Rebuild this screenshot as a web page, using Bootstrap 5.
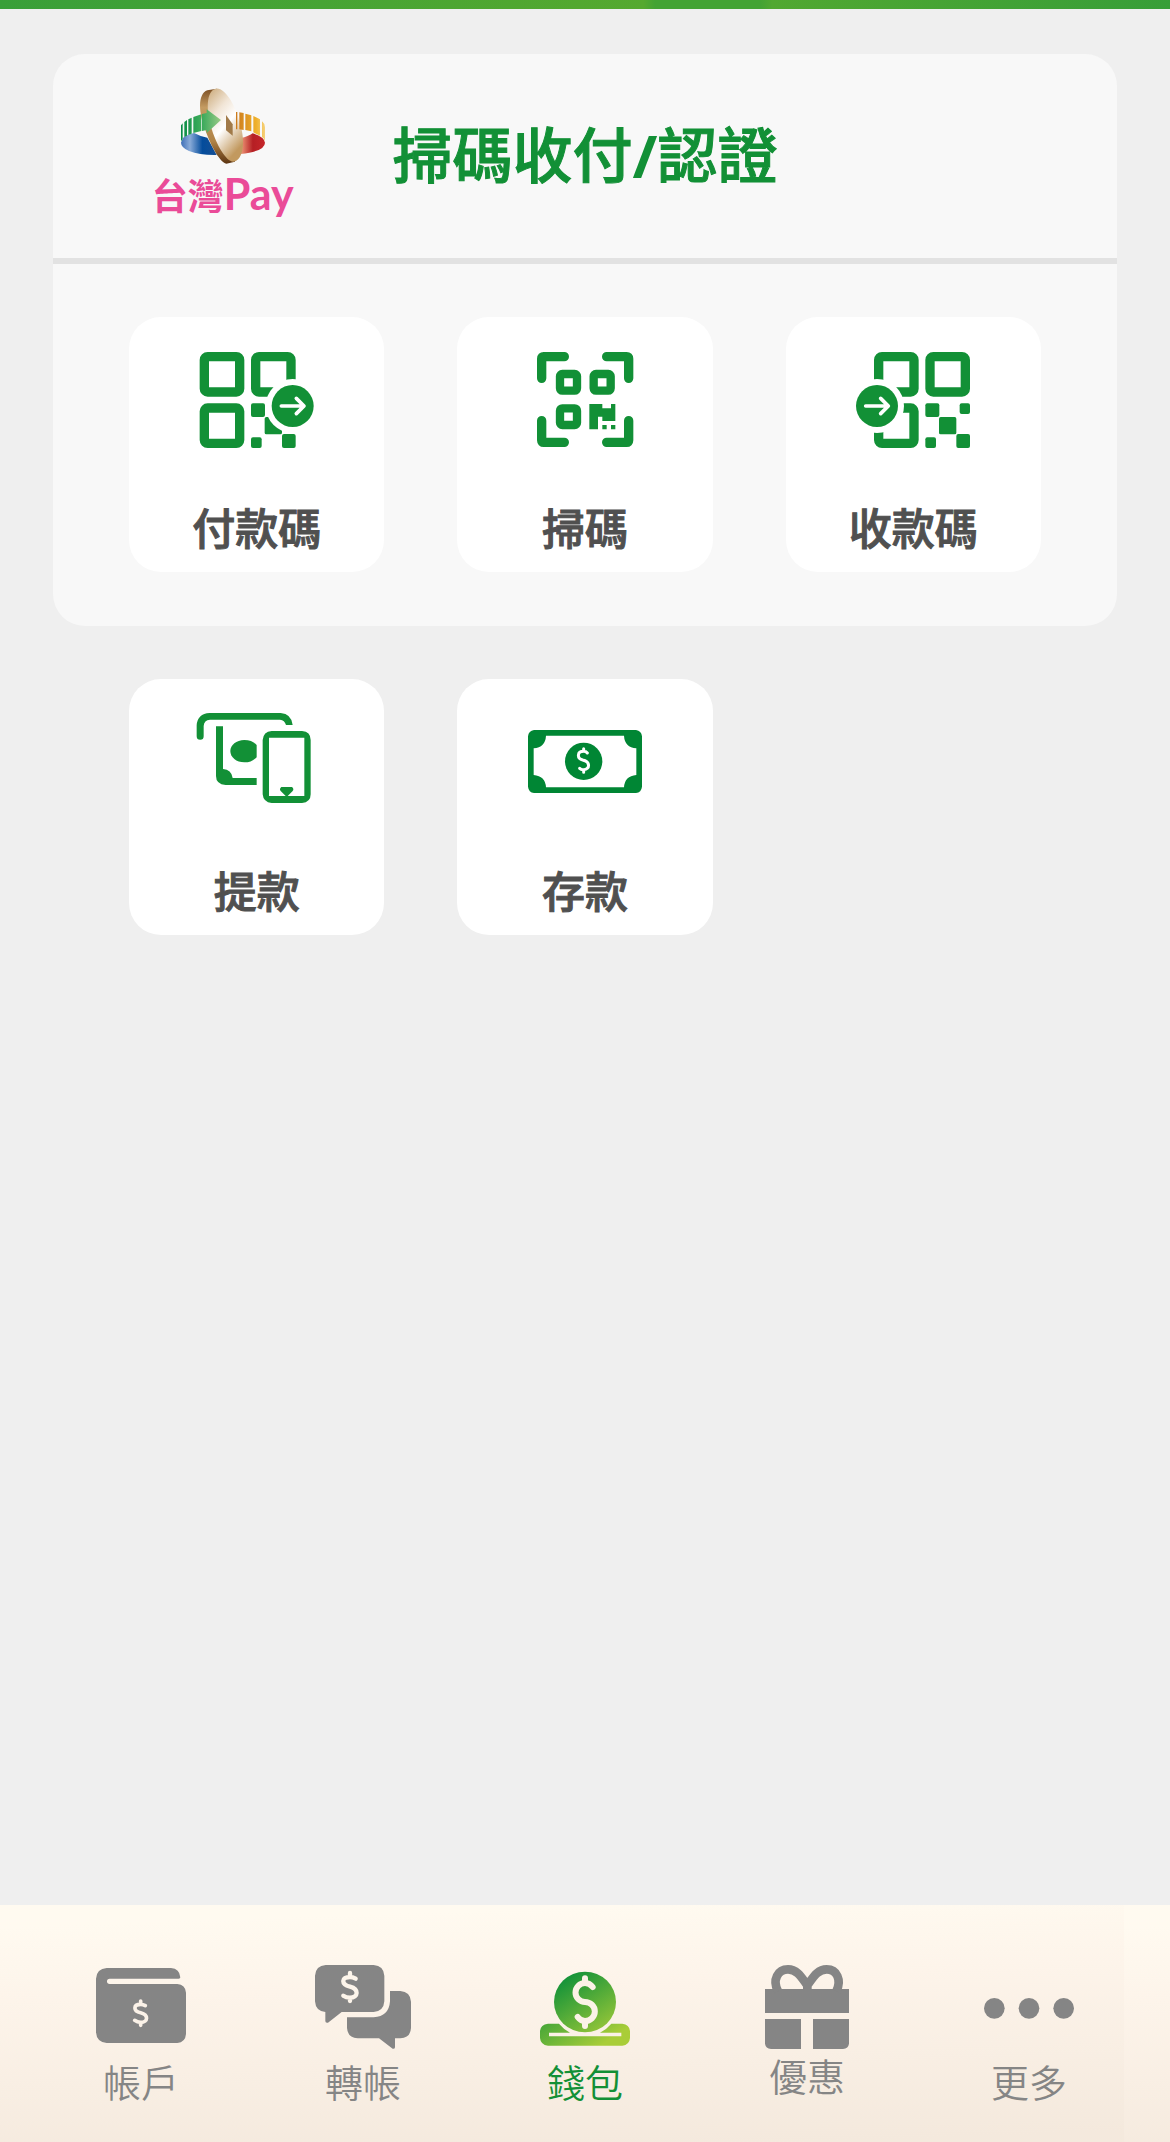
<!DOCTYPE html>
<html lang="zh-Hant">
<head>
<meta charset="utf-8">
<meta name="viewport" content="width=device-width, initial-scale=1">
<title>錢包</title>
<link href="https://cdn.jsdelivr.net/npm/bootstrap@5.3.0/dist/css/bootstrap.min.css" rel="stylesheet">
<style>
  :root { --brand: #129036; --muted: #858585; }
  body { background: #efefef; font-family: "Noto Sans CJK TC", sans-serif; }
  a { text-decoration: none; }
  svg { display: block; overflow: visible; }
  .top-strip { height: 9px; background: linear-gradient(90deg, #399f39 0, #55a92f 55%, #43a334 56%, #43a334 65%, #51a831 66%, #379e38 100%); }
  .page-main { padding: 45px 53px; }
  .pay-panel { background: #f8f8f8; border-radius: 32px; }
  .pay-head { display: grid; grid-template-columns: 1fr auto 1fr; padding: 34px 0; border-bottom: 6px solid #e2e2e2; }
  .pay-title { font-size: 60px; line-height: 72px; font-weight: 500; -webkit-text-stroke: 1px currentColor; color: var(--brand); padding-bottom: 9px; }
  .pay-title span { font-family: "Noto Sans", sans-serif; font-weight: 700; line-height: 1; -webkit-text-stroke: 0; }
  .pay-name { color: #ea4b98; font-size: 36px; line-height: 60px; font-weight: 700; }
  .pay-name span { font-family: Lato, sans-serif; font-size: 43px; line-height: 1; }
  .tiles { display: grid; grid-template-columns: repeat(3, 1fr); gap: 73px; padding: 53px 76px 54px; }
  .tile { aspect-ratio: 1; background: #fff; border-radius: 32px; padding: 26px 0 18px; color: #505050; font-size: 43px; line-height: 56px; font-weight: 500; -webkit-text-stroke: 1px currentColor; }
  .tile svg { width: 114px; height: 114px; color: var(--brand); }
  .tab-bar { padding: 60px 30px 35px; background: linear-gradient(178deg, #fffaf0 8%, #fdf4ea 35%, #f4e9dd 96%) 0 0 / 1124px 100%; }
  .tab-bar a { flex: 1 1 0; color: var(--muted); font-size: 38px; line-height: 52px; font-weight: 350; }
  .tab-bar a.active { color: var(--brand); }
  .tab-bar svg { height: 90px; }
  .tab-bar svg.gift { height: 84px; }
</style>
<script src="https://cdn.jsdelivr.net/npm/bootstrap@5.3.0/dist/js/bootstrap.bundle.min.js"></script>
</head>
<body class="d-flex flex-column min-vh-100">
<header class="top-strip"></header>

<main class="page-main flex-grow-1">
  <section class="pay-panel">
    <div class="pay-head align-items-center">
      <div class="d-flex flex-column align-items-center">
        <svg width="84" height="76" viewBox="183 54 252 228" aria-hidden="true">
          <defs>
            <linearGradient id="lgBlue"><stop offset="0" stop-color="#3f6fb7"/><stop offset=".25" stop-color="#8aabd8"/><stop offset=".6" stop-color="#044c9c"/><stop offset="1" stop-color="#164f94"/></linearGradient>
            <linearGradient id="lgRed"><stop offset="0" stop-color="#ef9a78"/><stop offset=".5" stop-color="#b51f24"/><stop offset="1" stop-color="#c6262a"/></linearGradient>
            <linearGradient id="lgGreen"><stop offset="0" stop-color="#078a45"/><stop offset="1" stop-color="#3fae5c"/></linearGradient>
            <linearGradient id="lgArrow"><stop offset="0" stop-color="#39a95b"/><stop offset="1" stop-color="#9bcb86"/></linearGradient>
            <linearGradient id="lgGold"><stop offset="0" stop-color="#cc7a1c"/><stop offset=".7" stop-color="#efb12c"/><stop offset="1" stop-color="#f6d27c"/></linearGradient>
            <linearGradient id="lgFace" x1="0" y1="0" x2=".55" y2="1"><stop offset="0" stop-color="#caa877"/><stop offset=".35" stop-color="#f1e5d6"/><stop offset=".6" stop-color="#fff"/><stop offset="1" stop-color="#c2995f"/></linearGradient>
            <linearGradient id="lgEdge" x1="0" y1="0" x2="0" y2="1"><stop offset="0" stop-color="#7c4f24"/><stop offset=".25" stop-color="#c49b62"/><stop offset=".7" stop-color="#b08346"/><stop offset="1" stop-color="#5d3512"/></linearGradient>
          </defs>
          <path fill="url(#lgBlue)" d="M183 218Q186 196 222 189Q240 199 262 203L290 255Q240 256 207 243Q183 232 183 218Z"/>
          <path fill="url(#lgRed)" d="M435 218Q432 200 398 190Q385 200 362 204V252Q435 244 435 218Z"/>
          <path fill="url(#lgEdge)" d="M290 56L262 61C232 72 236 130 256 180C274 232 300 276 319 281L345 275Z"/>
          <path fill="url(#lgFace)" d="M288 56C315 52 345 105 358 152C375 205 374 262 345 274C322 283 290 225 276 180C258 125 257 62 288 56Z"/>
          <path fill="url(#lgGreen)" d="M183 166L188 160V206L183 214ZM193 156L201 150V197L193 201ZM205 148L215 143V191L205 195ZM220 141L244 133V183L220 189Z"/>
          <path fill="url(#lgArrow)" d="M246 132L260 129V118L303 150L260 189V180L246 183Z"/>
          <path fill="#a17a49" d="M318 135L338 163V197L318 181Z"/>
          <path fill="url(#lgGold)" d="M348 126H352V178H348ZM358 127L371 129V180L358 178ZM376 131L394 136V184L376 180ZM400 138L420 148V197L400 187ZM426 154Q435 161 435 172V214Q432 204 426 201Z"/>
        </svg>
        <div class="pay-name">台灣<span>Pay</span></div>
      </div>
      <h1 class="pay-title m-0">掃碼收付<span>/</span>認證</h1>
    </div>

    <div class="tiles">
      <a href="#" class="tile d-flex flex-column align-items-center justify-content-between">
        <svg viewBox="238 99 342 342" fill="currentColor" aria-hidden="true">
          <g fill="none" stroke="currentColor" stroke-width="28">
            <rect x="251" y="140" width="106" height="106" rx="10"/><rect x="251" y="294" width="106" height="106" rx="10"/><rect x="405" y="140" width="106" height="106" rx="10"/>
          </g>
          <rect x="391" y="280" width="42" height="41" rx="6"/><rect x="432" y="321" width="52" height="52" rx="5"/><rect x="391" y="382" width="32" height="32" rx="6"/>
          <circle cx="516" cy="288" r="81" fill="#fff"/><circle cx="516" cy="288" r="63"/>
          <rect x="484" y="372" width="41" height="42" rx="6"/>
          <path d="M482 288H549M527 265L550 288L527 311" fill="none" stroke="#fff" stroke-width="11" stroke-linecap="round" stroke-linejoin="round"/>
        </svg>
        <span>付款碼</span>
      </a>
      <a href="#" class="tile d-flex flex-column align-items-center justify-content-between">
        <svg viewBox="234 99 342 342" fill="none" stroke="currentColor" aria-hidden="true">
          <path stroke-width="28" stroke-linecap="round" d="M275 205V146Q275 140 281 140H343M470 140H530Q536 140 536 146V205M275 332V391Q275 397 281 397H343M470 397H530Q536 397 536 391V332"/>
          <g stroke-width="25"><rect x="330" y="192" width="51" height="50" rx="7"/><rect x="431" y="192" width="51" height="50" rx="7"/><rect x="330" y="295" width="51" height="50" rx="7"/></g>
          <path fill="currentColor" stroke="none" d="M418 282H457V295H483V282H496V333H457V320H444V358H418ZM457 345h13v13h-13zM483 345h13v13h-13z"/>
        </svg>
        <span>掃碼</span>
      </a>
      <a href="#" class="tile d-flex flex-column align-items-center justify-content-between">
        <svg viewBox="231 99 342 342" fill="currentColor" aria-hidden="true">
          <g fill="none" stroke="currentColor" stroke-width="28">
            <rect x="299" y="140" width="106" height="106" rx="10"/><rect x="299" y="294" width="106" height="106" rx="10"/><rect x="453" y="140" width="106" height="106" rx="10"/>
          </g>
          <rect x="439" y="280" width="42" height="41" rx="6"/><rect x="542" y="280" width="31" height="32" rx="6"/><rect x="480" y="321" width="52" height="52" rx="5"/><rect x="439" y="382" width="32" height="32" rx="6"/><rect x="532" y="372" width="41" height="42" rx="6"/>
          <circle cx="294" cy="288" r="81" fill="#fff"/><circle cx="294" cy="288" r="63"/>
          <path d="M260 288H327M305 265L328 288L305 311" fill="none" stroke="#fff" stroke-width="11" stroke-linecap="round" stroke-linejoin="round"/>
        </svg>
        <span>收款碼</span>
      </a>
    </div>
  </section>

  <div class="tiles">
    <a href="#" class="tile d-flex flex-column align-items-center justify-content-between">
      <svg viewBox="238 105 342 342" fill="currentColor" aria-hidden="true">
        <path d="M228 199V166Q230 131 267 129H480Q512 131 516 165H496Q492 150 478 149H268Q250 150 249 168V199A10 10 0 0 1 228 199Z"/>
        <path d="M286 169H307V297Q332 298 336 324H408V345H315Q286 343 286 318Z"/>
        <path d="M408 225V262C396 273 386 277 371 277C347 277 329 262 329 243C329 225 347 210 371 210C387 210 399 215 408 225Z"/>
        <path fill-rule="evenodd" d="M453 183H544Q570 185 570 210V373Q570 397 544 399H453Q428 397 426 373V210Q428 185 453 183ZM445 203V378H551V203Z"/>
        <path d="M482 351H514Q521 357 516 363L498 381L480 363Q475 357 482 351Z"/>
      </svg>
      <span>提款</span>
    </a>
    <a href="#" class="tile d-flex flex-column align-items-center justify-content-between">
      <svg viewBox="234 105 342 342" fill="#008634" aria-hidden="true">
        <path fill-rule="evenodd" d="M252 180H558Q574 182 576 199V350Q574 367 558 369H252Q236 367 234 350V199Q236 182 252 180ZM288 197Q286 232 251 235V315Q286 318 288 352H522Q524 318 559 315V235Q524 232 522 197Z"/>
        <circle cx="401" cy="274" r="56"/>
        <path fill="none" stroke="#fff" stroke-width="9" stroke-linecap="round" d="M412 249Q408 244 401 244C381 244 380 265 398 270C421 275 421 297 401 299Q394 300 389 295M401 236V243M401 300V307"/>
      </svg>
      <span>存款</span>
    </a>
  </div>
</main>

<nav class="tab-bar d-flex" aria-label="主選單">
  <a href="#" class="d-flex flex-column align-items-center">
    <svg viewBox="108 195 270 270" fill="currentColor" aria-hidden="true">
      <path d="M140 204H333Q359 206 361 232Q361 236 356 236H149A8 8 0 0 0 149 252H352Q376 254 378 278V402Q376 427 352 429H140Q110 427 108 397V236Q110 206 140 204Z"/>
      <path fill="none" stroke="#fbf2e8" stroke-width="11" stroke-linecap="round" d="M256 317Q249 313 242 313C219 313 219 333 242 338C266 344 265 367 242 367Q232 367 224 361M242 303V313M242 367V376"/>
    </svg>
    帳戶
  </a>
  <a href="#" class="d-flex flex-column align-items-center">
    <svg viewBox="765 195 288 270" fill="currentColor" aria-hidden="true">
      <path d="M797 195H941Q971 197 973 227V304Q971 334 941 336H845L804 368Q796 370 796 363V336Q767 334 765 304V227Q767 197 797 195Z"/>
      <path d="M990 273H1021Q1051 275 1053 305V384Q1051 414 1021 415H1005V442Q1004 448 998 446L957 415H893Q863 413 861 384V352H941Q987 349 990 304Z"/>
      <path fill="none" stroke="#fdf5eb" stroke-width="13" stroke-linecap="round" d="M887 236Q878 231 870 231C843 231 843 253 870 260C897 267 896 293 870 293Q858 293 850 287M870 219V231M870 293V303"/>
    </svg>
    轉帳
  </a>
  <a href="#" class="active d-flex flex-column align-items-center" aria-current="page">
    <svg viewBox="330 195 270 270" fill="url(#lgWallet)" aria-hidden="true">
      <defs><linearGradient id="lgWallet" gradientUnits="userSpaceOnUse" x1="405" y1="235" x2="530" y2="425"><stop offset="0" stop-color="#159339"/><stop offset="1" stop-color="#a9cd38"/></linearGradient></defs>
      <path fill-rule="evenodd" d="M354 371H387Q401 388 420 398H357V409H574V398H510Q530 388 544 371H577Q598 373 600 393V414Q598 435 577 437H354Q332 435 330 414V393Q332 373 354 371Z"/>
      <ellipse cx="465" cy="306" rx="93" ry="91"/>
      <path fill="none" stroke="#fbf2e7" stroke-width="18" stroke-linecap="round" d="M488 261Q479 249 465 249A28 28 0 0 0 465 306A29 28 0 0 1 465 363Q452 363 443 351M465 235V249M465 363V378"/>
    </svg>
    錢包
  </a>
  <a href="#" class="d-flex flex-column align-items-center">
    <svg class="gift" viewBox="15 195 252 252" fill="currentColor" aria-hidden="true">
      <path d="M15 267H267V339H15ZM15 357H123V447H33Q17 445 15 431ZM159 357H267V431Q265 445 249 447H159Z"/>
      <path fill="none" stroke="currentColor" stroke-width="26" d="M54 274C36 239 54 208 84 208C112 208 125 233 142 256C159 233 172 208 200 208C230 208 246 239 229 274M142 252V268"/>
    </svg>
    優惠
  </a>
  <a href="#" class="d-flex flex-column align-items-center">
    <svg viewBox="672 195 270 270" fill="currentColor" aria-hidden="true">
      <circle cx="703" cy="325" r="31"/><circle cx="807" cy="325" r="31"/><circle cx="911" cy="325" r="31"/>
    </svg>
    更多
  </a>
</nav>
</body>
</html>
